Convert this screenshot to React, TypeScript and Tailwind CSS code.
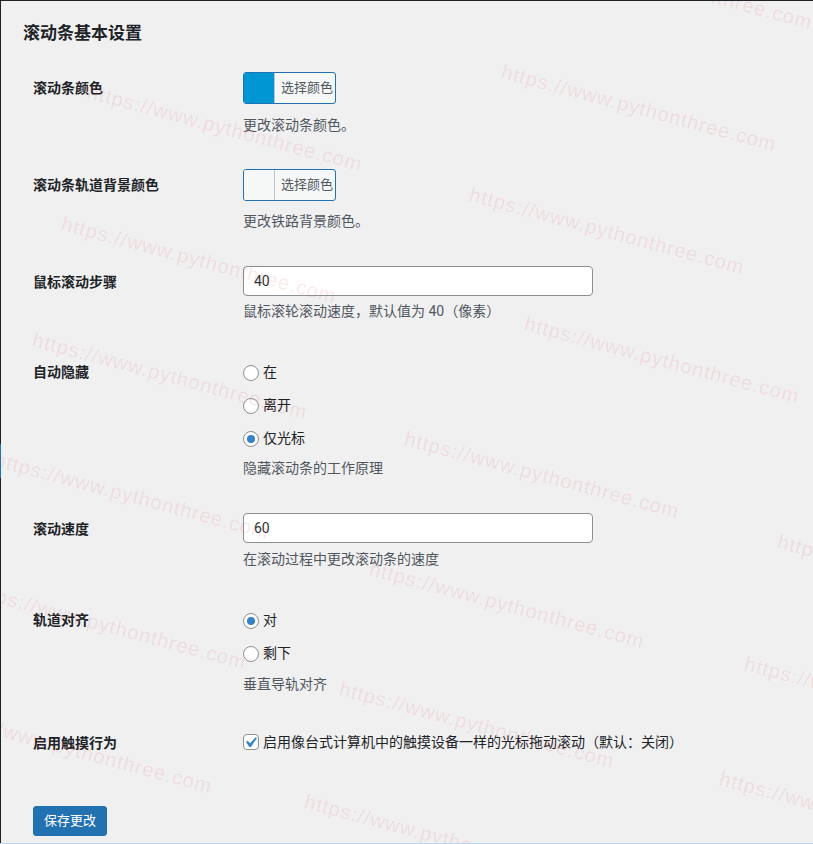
import React from 'react'

const marks: [number, number][] = [
  [88, 90],
  [538, -52],
  [502, 70],
  [470, 193],
  [62, 222],
  [525, 322],
  [33, 338],
  [405, 437],
  [-5, 458],
  [778, 540],
  [370, 567],
  [-28, 588],
  [745, 662],
  [340, 687],
  [-62, 712],
  [720, 777],
  [305, 800],
]

function ColorButton({ swatch }: { swatch: string }) {
  return (
    <button
      type="button"
      className="flex h-[32px] w-[93px] overflow-hidden rounded-[3px] border border-[#2271b1] bg-[#f6f7f7]"
    >
      <span className="h-full w-[30px]" style={{ background: swatch }} />
      <span className="flex h-full flex-1 items-center border-l border-[#c3c4c7] pl-[6px] text-[13px] text-[#50575e]">
        选择颜色
      </span>
    </button>
  )
}

function Radio({ label, checked }: { label: string; checked?: boolean }) {
  return (
    <label className="flex h-[33px] items-center gap-[4px] text-[14px] text-[#1d2327]">
      <span className="flex h-[16px] w-[16px] items-center justify-center rounded-full border border-[#8c8f94] bg-white">
        {checked && <span className="h-[8px] w-[8px] rounded-full bg-[#3582c4]" />}
      </span>
      {label}
    </label>
  )
}

function Row({
  label,
  mt,
  lh,
  children,
}: {
  label: string
  mt: string
  lh: string
  children: React.ReactNode
}) {
  return (
    <div className={`flex ${mt}`}>
      <div className={`w-[220px] pl-[10px] text-[14px] font-semibold text-[#1d2327] ${lh}`}>
        {label}
      </div>
      <div className="flex-1">{children}</div>
    </div>
  )
}

function Desc({ children, mt }: { children: React.ReactNode; mt: string }) {
  return <p className={`${mt} text-[14px] leading-[20px] text-[#50575e]`}>{children}</p>
}

export default function App() {
  return (
    <div
      className="relative flex h-[844px] overflow-hidden border-t border-b border-t-[#1d2327] border-b-[#b9d4ee] bg-[#f0f0f1]"
      style={{ fontFamily: 'Roboto, "Noto Sans CJK SC", sans-serif' }}
    >
      <div className="flex w-px flex-col">
        <div className="h-[443px] bg-[#1d2327]" />
        <div className="h-[34px] bg-[#2271b1]" />
        <div className="flex-1 bg-[#1d2327]" />
      </div>

      <div className="flex-1 pl-[22px] pt-[21px]">
        <h2 className="text-[17px] font-semibold leading-[22px] text-[#1d2327]">滚动条基本设置</h2>

        <Row label="滚动条颜色" mt="mt-[28px]" lh="leading-[32px]">
          <ColorButton swatch="#0096d3" />
          <Desc mt="mt-[11px]">更改滚动条颜色。</Desc>
        </Row>

        <Row label="滚动条轨道背景颜色" mt="mt-[34px]" lh="leading-[32px]">
          <ColorButton swatch="#f6f7f7" />
          <Desc mt="mt-[10px]">更改铁路背景颜色。</Desc>
        </Row>

        <Row label="鼠标滚动步骤" mt="mt-[35px]" lh="leading-[32px]">
          <input
            readOnly
            value="40"
            className="h-[30px] w-[350px] rounded-[4px] border border-[#8c8f94] bg-white px-[10px] text-[14px] text-[#2c3338] outline-none"
          />
          <Desc mt="mt-[5px]">鼠标滚轮滚动速度，默认值为 40（像素）</Desc>
        </Row>

        <Row label="自动隐藏" mt="mt-[35px]" lh="leading-[33px]">
          <Radio label="在" />
          <Radio label="离开" />
          <Radio label="仅光标" checked />
          <Desc mt="mt-[3px]">隐藏滚动条的工作原理</Desc>
        </Row>

        <Row label="滚动速度" mt="mt-[35px]" lh="leading-[32px]">
          <input
            readOnly
            value="60"
            className="h-[30px] w-[350px] rounded-[4px] border border-[#8c8f94] bg-white px-[10px] text-[14px] text-[#2c3338] outline-none"
          />
          <Desc mt="mt-[6px]">在滚动过程中更改滚动条的速度</Desc>
        </Row>

        <Row label="轨道对齐" mt="mt-[35px]" lh="leading-[33px]">
          <Radio label="对" checked />
          <Radio label="剩下" />
          <Desc mt="mt-[4px]">垂直导轨对齐</Desc>
        </Row>

        <Row label="启用触摸行为" mt="mt-[36px]" lh="leading-[26px]">
          <label className="flex h-[24px] items-center gap-[4px] text-[14px] text-[#1d2327]">
            <span className="relative h-[16px] w-[16px] rounded-[4px] border border-[#8c8f94] bg-white">
              <svg viewBox="0 0 20 20" className="absolute left-[-4px] top-[-3px] h-[21px] w-[21px]">
                <path
                  fill="#3582c4"
                  d="M14.83 4.89l1.34.94-5.81 8.38H9.02L5.78 9.67l1.34-1.25 2.57 2.4z"
                />
              </svg>
            </span>
            启用像台式计算机中的触摸设备一样的光标拖动滚动（默认：关闭）
          </label>
        </Row>

        <button
          type="button"
          className="ml-[10px] mt-[50px] h-[30px] rounded-[3px] border border-[#2271b1] bg-[#2271b1] px-[10px] text-[13px] text-white"
        >
          保存更改
        </button>
      </div>

      <div className="pointer-events-none absolute inset-0">
        {marks.map(([x, y], i) => (
          <span
            key={i}
            className="absolute origin-[0_50%] rotate-[15deg] whitespace-nowrap text-[20px] leading-[24px] tracking-[1px] text-[rgba(225,40,50,0.11)]"
            style={{ left: x, top: y - 12, fontFamily: '"Liberation Sans", sans-serif' }}
          >
            https://www.pythonthree.com
          </span>
        ))}
      </div>
    </div>
  )
}
